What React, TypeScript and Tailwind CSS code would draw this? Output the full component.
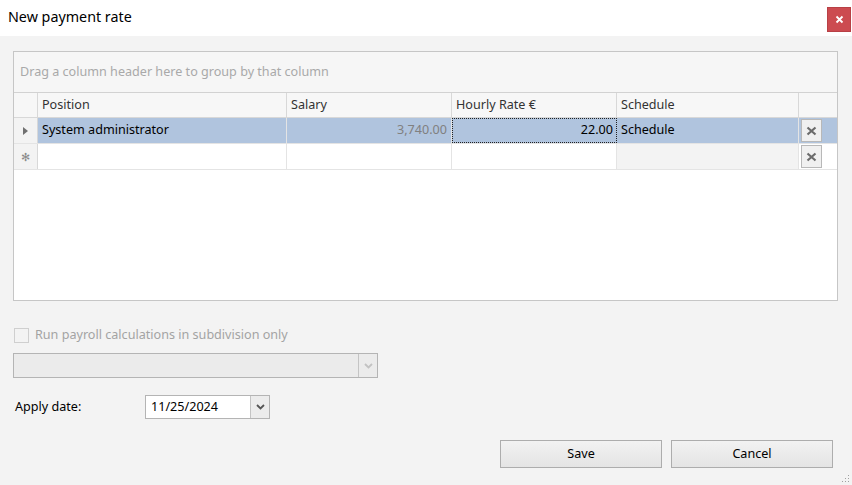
import React from "react";

const font = { fontFamily: '"Segoe UI", "Noto Sans", "Open Sans", sans-serif' };

function XBtn() {
  return (
    <div className="w-[21px] h-[23px] border border-[#b8b8b8] bg-[#f0f0f0] flex items-center justify-center">
      <svg width="11" height="10" viewBox="0 0 11 10">
        <path d="M1.5 1.5 L9.5 8.5 M9.5 1.5 L1.5 8.5" stroke="#6b6b6b" strokeWidth="2.2" />
      </svg>
    </div>
  );
}

function Chevron({ color }: { color: string }) {
  return (
    <svg width="9" height="6" viewBox="0 0 9 6">
      <path d="M1 1 L4.5 4.5 L8 1" stroke={color} strokeWidth="1.8" fill="none" />
    </svg>
  );
}

export default function App() {
  return (
    <div className="w-[852px] h-[485px] bg-[#f3f3f3] flex flex-col relative text-[12.6px] text-[#222]" style={font}>
      {/* title bar */}
      <div className="h-[36px] bg-white flex items-start justify-between shrink-0">
        <div className="pl-[8px] pt-[6px] text-[14.3px] text-black">New payment rate</div>
        <div className="mt-[7px] mr-[1px] w-[24px] h-[25px] bg-[#cc4b50] border border-[#b84045] flex items-center justify-center">
          <svg width="9" height="9" viewBox="0 0 9 9">
            <path d="M1.5 1.5 L7.5 7.5 M7.5 1.5 L1.5 7.5" stroke="white" strokeWidth="1.8" />
          </svg>
        </div>
      </div>

      <div className="px-[13px] pt-[15px] flex flex-col">
        {/* grid */}
        <div className="w-[825px] h-[250px] border border-[#c6c6c6] bg-white flex flex-col">
          <div className="h-[41px] bg-[#f6f6f6] border-b border-[#d2d2d2] flex items-center pl-[6px] text-[#a9a9a9]">
            Drag a column header here to group by that column
          </div>
          {/* header */}
          <div className="h-[25px] flex bg-[#f7f7f7] border-b border-[#d8d8d8] text-[#333]">
            <div className="w-[24px] border-r border-[#d8d8d8]" />
            <div className="w-[249px] border-r border-[#d8d8d8] pl-[4px] flex items-center">Position</div>
            <div className="w-[165px] border-r border-[#d8d8d8] pl-[4px] flex items-center">Salary</div>
            <div className="w-[165px] border-r border-[#d8d8d8] pl-[4px] flex items-center">Hourly Rate €</div>
            <div className="w-[182px] border-r border-[#d8d8d8] pl-[4px] flex items-center">Schedule</div>
            <div className="flex-1" />
          </div>
          {/* row 1 */}
          <div className="h-[26px] flex border-b border-[#e4e4e4]">
            <div className="w-[24px] bg-[#f3f3f3] border-r border-[#d8d8d8] flex items-center justify-center">
              <svg width="5" height="8" viewBox="0 0 5 8"><path d="M0 0 L5 4 L0 8 Z" fill="#707070" /></svg>
            </div>
            <div className="w-[249px] bg-[#b0c4de] border-r border-[#e4e4e4] pl-[4px] flex items-center text-black">System administrator</div>
            <div className="w-[165px] bg-[#b0c4de] border-r border-[#e4e4e4] pr-[4px] flex items-center justify-end text-[#808080]">3,740.00</div>
            <div className="w-[165px] bg-[#b0c4de] border border-dotted border-[#222] pr-[3px] flex items-center justify-end text-black">22.00</div>
            <div className="w-[182px] bg-[#b0c4de] border-r border-[#e4e4e4] pl-[4px] flex items-center text-black">Schedule</div>
            <div className="flex-1 bg-[#b0c4de] flex items-center pl-[2px]"><XBtn /></div>
          </div>
          {/* row 2 */}
          <div className="h-[26px] flex border-b border-[#e4e4e4]">
            <div className="w-[24px] bg-[#f3f3f3] border-r border-[#d8d8d8] flex items-center justify-center">
              <span className="text-[#8a8a8a] text-[11px] leading-none">✻</span>
            </div>
            <div className="w-[249px] border-r border-[#e4e4e4]" />
            <div className="w-[165px] border-r border-[#e4e4e4]" />
            <div className="w-[165px] border-r border-[#e4e4e4]" />
            <div className="w-[182px] bg-[#f3f3f3] border-r border-[#e4e4e4]" />
            <div className="flex-1 flex items-center pl-[2px]"><XBtn /></div>
          </div>
          <div className="flex-1" />
        </div>

        {/* checkbox */}
        <div className="mt-[26px] flex items-center h-[16px] pl-[1px]">
          <div className="w-[15px] h-[15px] border border-[#cfcfcf] bg-[#f3f3f3]" />
          <span className="ml-[6px] text-[#a3a3a3]">Run payroll calculations in subdivision only</span>
        </div>

        {/* combo */}
        <div className="mt-[10px] w-[365px] h-[25px] border border-[#b4b4b4] bg-[#ebebeb] flex">
          <div className="flex-1" />
          <div className="w-[19px] border-l border-[#c4c4c4] flex items-center justify-center">
            <Chevron color="#c2c2c2" />
          </div>
        </div>

        {/* apply date */}
        <div className="mt-[17px] flex items-center h-[24px]">
          <div className="w-[132px] pl-[2px] text-black">Apply date:</div>
          <div className="w-[125px] h-[24px] border border-[#b4b4b4] bg-white flex">
            <div className="flex-1 pl-[5px] flex items-center text-black">11/25/2024</div>
            <div className="w-[19px] bg-[#ececec] border-l border-[#c4c4c4] flex items-center justify-center">
              <Chevron color="#555" />
            </div>
          </div>
        </div>

        {/* buttons */}
        <div className="mt-[21px] flex justify-end gap-[9px] pr-[6px]">
          <div className="w-[162px] h-[28px] border border-[#adadad] bg-gradient-to-b from-[#f2f2f2] to-[#e4e4e4] flex items-center justify-center text-black">Save</div>
          <div className="w-[162px] h-[28px] border border-[#adadad] bg-gradient-to-b from-[#f2f2f2] to-[#e4e4e4] flex items-center justify-center text-black">Cancel</div>
        </div>
      </div>

      {/* resize grip */}
      <svg className="absolute right-[2px] bottom-[2px]" width="8" height="8" viewBox="0 0 8 8">
        <rect x="6" y="0" width="1" height="1" fill="#a0a0a0" />
        <rect x="3" y="3" width="1" height="1" fill="#a0a0a0" />
        <rect x="6" y="3" width="1" height="1" fill="#a0a0a0" />
        <rect x="0" y="6" width="1" height="1" fill="#a0a0a0" />
        <rect x="3" y="6" width="1" height="1" fill="#a0a0a0" />
        <rect x="6" y="6" width="1" height="1" fill="#a0a0a0" />
      </svg>
    </div>
  );
}
